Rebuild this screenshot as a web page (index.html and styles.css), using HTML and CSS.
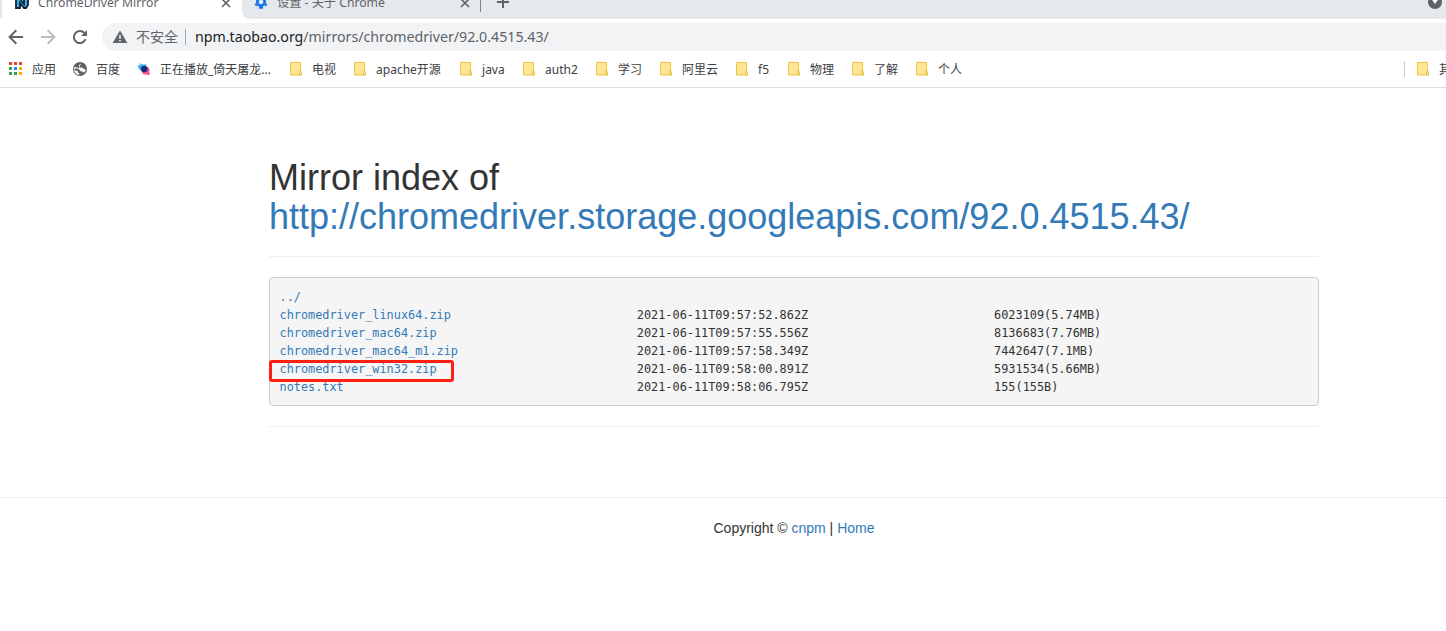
FILE: index.html
```
<!DOCTYPE html>
<html lang="zh-CN">
<head>
<meta charset="utf-8">
<title>ChromeDriver Mirror</title>
<link rel="stylesheet" href="styles.css">
</head>
<body>
<svg width="0" height="0" class="defs">
  <symbol id="folder" viewBox="0 0 14 16"><path d="M.5 1.500h10v10.500h1v2H.5z" fill="#ffe694" stroke="#e8c547"/><path d="M9.500 11q0-1 1-1t1 1v3h-2z" fill="#ffe694" stroke="#e8c547"/></symbol>
</svg>
<header class="browser">
  <div class="tabs">
    <div class="edge"></div>
    <div class="tab active">
      <svg class="favicon" width="16" height="10" viewBox="0 0 16 10"><path d="M2-1h4l4 5V-1h4v6l-2 3h-2L6 3v5H2z" fill="#35aef2" stroke="#10202c" stroke-width="1.800"/></svg>
      <span class="tab-title t1">ChromeDriver Mirror</span>
      <svg class="close" width="10" height="10" viewBox="0 0 10 10"><path d="M1-1l8 8M9-1L1 7" stroke="#5f6368" stroke-width="1.600"/></svg>
    </div>
    <div class="strip">
      <svg class="gear" width="14" height="10" viewBox="0 0 14 10"><circle cx="7" cy="2" r="3.700" fill="none" stroke="#1a73e8" stroke-width="2.800"/><path d="M2.800 4.400L1.300 5.300M11.200 4.400l1.500.9" stroke="#1a73e8" stroke-width="2.800"/><path d="M5.200 5.500h3.600l.4 3.200H4.800z" fill="#1a73e8"/></svg>
      <span class="tab-title t2">设置 - 关于 Chrome</span>
      <svg class="close" width="10" height="10" viewBox="0 0 10 10"><path d="M1-1l8 8M9-1L1 7" stroke="#5f6368" stroke-width="1.600"/></svg>
      <span class="divider"></span>
      <svg class="plus" width="12" height="10" viewBox="0 0 12 10"><path d="M0 2h12M6 0v8" stroke="#5f6368" stroke-width="2"/></svg>
      <svg class="account" width="16" height="10" viewBox="0 0 16 10"><circle cx="8" cy="2" r="7" fill="#5f6368"/><path d="M4.500-1h7L8 4z" fill="#fff"/></svg>
    </div>
  </div>
  <div class="toolbar">
    <svg width="16" height="16" viewBox="0 0 16 16" fill="none" stroke="#5f6368" stroke-width="2"><path d="M15 8H2M8.300 1.300L1.600 8l6.700 6.700"/></svg>
    <svg width="16" height="16" viewBox="0 0 16 16" fill="none" stroke="#bbbdbf" stroke-width="2"><path d="M1 8h13M7.700 1.300L14.400 8l-6.700 6.700"/></svg>
    <svg width="16" height="16" viewBox="0 0 16 16"><path d="M13.500 10.200A6 6 0 1 1 12.300 4" fill="none" stroke="#5f6368" stroke-width="2"/><path d="M15 1v6H9z" fill="#5f6368"/></svg>
    <div class="omnibox">
      <svg width="16" height="14" viewBox="0 0 16 14"><path d="M8 .5l7.300 12.500H.7z" fill="#5f6368"/><path d="M8 5v4M8 10v1.600" stroke="#f1f3f4" stroke-width="1.600"/></svg>
      <span class="insecure">不安全</span>
      <span class="bar"></span>
      <span class="url"><b>npm.taobao.org</b>/mirrors/chromedriver/92.0.4515.43/</span>
    </div>
  </div>
  <nav class="bookmarks">
    <a class="item apps"><svg width="13" height="13" viewBox="0 0 13 13"><path d="M0 0h3v3H0zM5 0h3v3H5zM10 0h3v3h-3z" fill="#ea4335"/><path d="M0 5h3v3H0zM0 10h3v3H0zM5 10h3v3H5z" fill="#34a058"/><path d="M5 5h3v3H5z" fill="#1a8cff"/><path d="M10 5h3v3h-3zM10 10h3v3h-3z" fill="#fbb100"/></svg><span>应用</span></a>
    <a class="item globe"><svg width="14" height="14" viewBox="0 0 14 14"><circle cx="7" cy="7" r="7" fill="#5f6368"/><path d="M8 1.500L6 3.300v1.200l1.700 1.300 1.800-.3 1 1.500 2 .2-.3 2.200-1.900 1.200-1.200-1.300H7.500L6.200 7.500 4.500 6.600l-3-.1.300 2L4.700 9v1.600l1.500.7v1.500l-2.700-.6L1.200 9 1 6l.4-1 3.200.5L6 6.300" fill="#fff"/></svg><span>百度</span></a>
    <a class="item video"><svg width="14" height="14" viewBox="0 0 14 14"><circle cx="8.700" cy="8.700" r="3.900" fill="#f5559b"/><path d="M9 10l3.500 2.500" stroke="#f5559b" stroke-width="2.500"/><path d="M.5 3.500l3-.5-1-2 3 1.500 4-.3L8 6 4 9 2 7z" fill="#36b5f0"/><circle cx="7.300" cy="7" r="3.300" fill="#202a7c"/></svg><span class="w-video">正在播放_倚天屠龙...</span></a>
    <a class="item"><svg width="14" height="16"><use href="#folder"/></svg><span>电视</span></a>
    <a class="item"><svg width="14" height="16"><use href="#folder"/></svg><span class="w-apache">apache开源</span></a>
    <a class="item"><svg width="14" height="16"><use href="#folder"/></svg><span class="w-java">java</span></a>
    <a class="item"><svg width="14" height="16"><use href="#folder"/></svg><span class="w-auth">auth2</span></a>
    <a class="item"><svg width="14" height="16"><use href="#folder"/></svg><span>学习</span></a>
    <a class="item"><svg width="14" height="16"><use href="#folder"/></svg><span>阿里云</span></a>
    <a class="item"><svg width="14" height="16"><use href="#folder"/></svg><span class="w-f5">f5</span></a>
    <a class="item"><svg width="14" height="16"><use href="#folder"/></svg><span>物理</span></a>
    <a class="item"><svg width="14" height="16"><use href="#folder"/></svg><span>了解</span></a>
    <a class="item"><svg width="14" height="16"><use href="#folder"/></svg><span>个人</span></a>
    <a class="item other"><svg width="14" height="16"><use href="#folder"/></svg><span>其</span></a>
  </nav>
</header>
<main class="container">
  <h1>Mirror index of <br><a>http://chromedriver.storage.googleapis.com/92.0.4515.43/</a></h1>
  <hr>
  <div class="listing">
    <div class="row"><a>../</a></div>
    <div class="row"><a>chromedriver_linux64.zip</a><span>2021-06-11T09:57:52.862Z</span><span>6023109(5.74MB)</span></div>
    <div class="row"><a>chromedriver_mac64.zip</a><span>2021-06-11T09:57:55.556Z</span><span>8136683(7.76MB)</span></div>
    <div class="row"><a>chromedriver_mac64_m1.zip</a><span>2021-06-11T09:57:58.349Z</span><span>7442647(7.1MB)</span></div>
    <div class="row"><a>chromedriver_win32.zip</a><span>2021-06-11T09:58:00.891Z</span><span>5931534(5.66MB)</span></div>
    <div class="row"><a>notes.txt</a><span>2021-06-11T09:58:06.795Z</span><span>155(155B)</span></div>
    <div class="highlight"></div>
  </div>
  <hr>
</main>
<footer class="footer"><p>Copyright © <a>cnpm</a> | <a>Home</a></p></footer>
</body>
</html>
```
FILE: styles.css
```
* { box-sizing: border-box; }
body { margin: 0; width: 1446px; height: 631px; overflow: hidden; background: #fff; color: #333; font: 14px/20px "Liberation Sans", Arial, sans-serif; }
.defs { position: absolute; }
svg { display: block; flex: none; }
.browser { font-family: "Noto Sans", "Noto Sans CJK SC", sans-serif; height: 88px; border-bottom: 1px solid #dadce0; overflow: hidden; }
.tabs { display: flex; height: 19px; }
.edge { width: 2px; background: #e5e9ec; border-bottom-right-radius: 6px; }
.tab { display: flex; width: 240px; padding-left: 12px; }
.tab-title { font-size: 12.200px; line-height: 18px; height: 18px; margin-top: -6px; color: #5f6368; white-space: nowrap; }
.t1 { width: 183px; margin-left: 8px; }
.t2 { width: 183px; margin-left: 9px; }
.strip { display: flex; flex: 1; background: #e5e9ec; border-bottom-left-radius: 8px; padding-left: 12px; }
.divider { width: 1px; height: 12px; background: #808488; margin-left: 10px; }
.plus { margin-left: 16px; }
.account { margin-left: auto; margin-right: 3px; }
.toolbar { display: flex; align-items: center; height: 32px; padding: 4px 0 0 8px; gap: 16px; }
.omnibox { display: flex; align-items: center; flex: 1; height: 28px; padding-left: 10px; margin-left: -2px; background: #f1f3f4; border-radius: 14px 0 0 14px; }
.insecure { font-size: 14px; color: #5f6368; margin-left: 8px; width: 49px; }
.bar { width: 1px; height: 16px; background: #a5a8ab; }
.url { margin-left: 9px; font-size: 14.200px; color: #5f6368; white-space: nowrap; }
.url b { font-weight: 400; color: #202124; }
.bookmarks { display: flex; align-items: center; height: 36px; padding-left: 9px; font-size: 12px; color: #3c4043; }
.item { display: flex; align-items: center; gap: 8px; margin-right: 18px; white-space: nowrap; flex: none; }
.item span { padding-top: 2px; }
.apps { gap: 10px; margin-right: 17px; }
.apps svg { margin-bottom: 1px; }
.globe { gap: 9px; }
.video { margin-left: -1px; }
.video span { margin-left: 1px; }
.w-video { width: 112px; }
.w-apache { width: 66px; }
.w-java { width: 23px; }
.w-auth { width: 33px; }
.w-f5 { width: 12px; }
.other { margin: 0 -5px 0 auto; padding-left: 12px; border-left: 1px solid #c8cacd; height: 16px; }
a { color: #337ab7; }
.item { color: #3c4043; }
.container { width: 1050px; margin-left: 269px; padding-top: 70px; }
h1 { margin: 0; font-size: 36px; line-height: 39px; font-weight: 400; white-space: nowrap; }
hr { border: 0; border-top: 1px solid #eee; margin: 20px 0 20px; }
.listing { position: relative; height: 129px; padding: 10px; border: 1px solid #ccc; border-radius: 4px; background: #f5f5f5; font: 11.870px/18px "DejaVu Sans Mono", monospace; }
.row { display: grid; grid-template-columns: 357.300px 357.300px 1fr; height: 18px; margin-left: -.5px; }
.highlight { position: absolute; left: -1px; top: 82px; width: 185px; height: 22px; border: 3px solid #ff1f12; border-radius: 3px; }
.listing + hr { margin: 20px 0 0; }
.footer { margin-top: 70px; border-top: 1px solid #eee; padding: 20px 0 0 142px; text-align: center; }
.footer p { margin: 0; }
```
